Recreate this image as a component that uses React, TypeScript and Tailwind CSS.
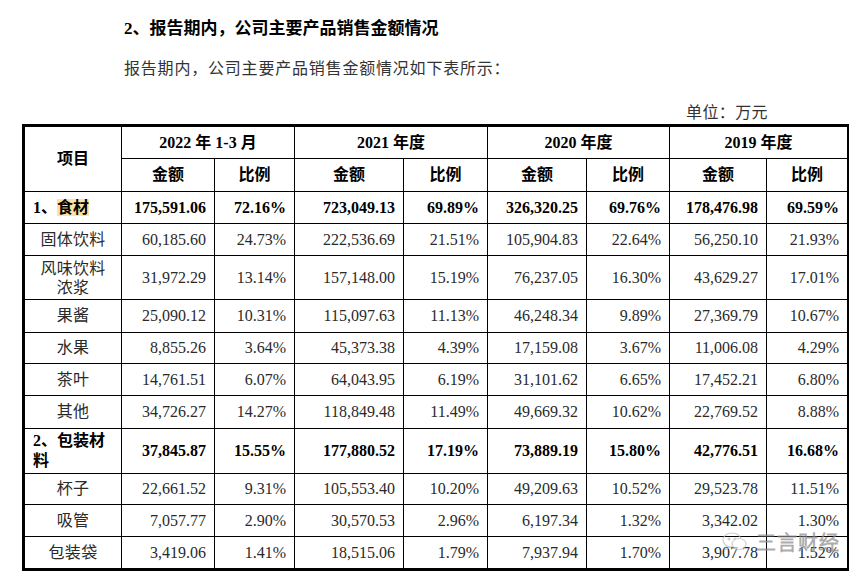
const font = { fontFamily: '"Liberation Serif", "Noto Sans CJK SC", serif' };

type Row = {
  name: string;
  vals: string[];
  bold?: boolean;
  h: string;
};

const rows: Row[] = [
  { name: "1、食材", bold: true, h: "h-[32px]", vals: ["175,591.06", "72.16%", "723,049.13", "69.89%", "326,320.25", "69.76%", "178,476.98", "69.59%"] },
  { name: "固体饮料", h: "h-[32px]", vals: ["60,185.60", "24.73%", "222,536.69", "21.51%", "105,904.83", "22.64%", "56,250.10", "21.93%"] },
  { name: "风味饮料浓浆", h: "h-[44px]", vals: ["31,972.29", "13.14%", "157,148.00", "15.19%", "76,237.05", "16.30%", "43,629.27", "17.01%"] },
  { name: "果酱", h: "h-[33px]", vals: ["25,090.12", "10.31%", "115,097.63", "11.13%", "46,248.34", "9.89%", "27,369.79", "10.67%"] },
  { name: "水果", h: "h-[31px]", vals: ["8,855.26", "3.64%", "45,373.38", "4.39%", "17,159.08", "3.67%", "11,006.08", "4.29%"] },
  { name: "茶叶", h: "h-[32px]", vals: ["14,761.51", "6.07%", "64,043.95", "6.19%", "31,101.62", "6.65%", "17,452.21", "6.80%"] },
  { name: "其他", h: "h-[33px]", vals: ["34,726.27", "14.27%", "118,849.48", "11.49%", "49,669.32", "10.62%", "22,769.52", "8.88%"] },
  { name: "2、包装材料", bold: true, h: "h-[45px]", vals: ["37,845.87", "15.55%", "177,880.52", "17.19%", "73,889.19", "15.80%", "42,776.51", "16.68%"] },
  { name: "杯子", h: "h-[31px]", vals: ["22,661.52", "9.31%", "105,553.40", "10.20%", "49,209.63", "10.52%", "29,523.78", "11.51%"] },
  { name: "吸管", h: "h-[32px]", vals: ["7,057.77", "2.90%", "30,570.53", "2.96%", "6,197.34", "1.32%", "3,342.02", "1.30%"] },
  { name: "包装袋", h: "h-[32px]", vals: ["3,419.06", "1.41%", "18,515.06", "1.79%", "7,937.94", "1.70%", "3,907.78", "1.52%"] },
];

const periods = ["2022 年 1-3 月", "2021 年度", "2020 年度", "2019 年度"];

function NameCell({ row }: { row: Row }) {
  if (row.name === "1、食材") {
    return (
      <td className="border border-black pl-[8px] text-left font-bold text-black">
        1、<span className="bg-[#fbe3a4]">食材</span>
      </td>
    );
  }
  if (row.name === "2、包装材料") {
    return (
      <td className="border border-black pl-[8px] pr-[10px] text-left font-bold leading-[20px] text-black">
        2、包装材料
      </td>
    );
  }
  if (row.name === "风味饮料浓浆") {
    return (
      <td className="border border-black text-center leading-[19px] tracking-[0.3px]">
        风味饮料
        <br />
        浓浆
      </td>
    );
  }
  return <td className="border border-black text-center tracking-[0.3px]">{row.name}</td>;
}

export default function App() {
  return (
    <div className="relative h-[579px] w-[867px] overflow-hidden bg-white text-[#2a2a2a]" style={font}>
      <h2 className="pl-[124px] pt-[19px] text-[17px] font-bold leading-[20px] text-black">
        2、报告期内，公司主要产品销售金额情况
      </h2>
      <p className="mt-[20px] pl-[124px] text-[16px] leading-[20px] tracking-[0.8px] text-[#333]">
        报告期内，公司主要产品销售金额情况如下表所示：
      </p>
      <p className="mt-[24px] pr-[99px] text-right text-[16px] leading-[20px] tracking-[0.4px] text-[#333]">
        单位：万元
      </p>

      <div className="ml-[22px] mt-px w-[827px] border-2 border-black">
        <table className="w-full table-fixed border-collapse text-[16px]">
          <colgroup>
            <col className="w-[97px]" />
            <col className="w-[93px]" />
            <col className="w-[80px]" />
            <col className="w-[109px]" />
            <col className="w-[84px]" />
            <col className="w-[99px]" />
            <col className="w-[83px]" />
            <col className="w-[97px]" />
            <col className="w-[81px]" />
          </colgroup>
          <thead className="text-black">
            <tr className="h-[32px]">
              <th rowSpan={2} className="border border-black text-center font-bold">
                项目
              </th>
              {periods.map((p) => (
                <th key={p} colSpan={2} className="border border-black text-center font-bold">
                  {p}
                </th>
              ))}
            </tr>
            <tr className="h-[33px]">
              {periods.flatMap((p) => [
                <th key={p + "a"} className="border border-black text-center font-bold">
                  金额
                </th>,
                <th key={p + "b"} className="border border-black text-center font-bold">
                  比例
                </th>,
              ])}
            </tr>
          </thead>
          <tbody>
            {rows.map((r) => (
              <tr key={r.name} className={r.h}>
                <NameCell row={r} />
                {r.vals.map((v, i) => (
                  <td
                    key={i}
                    className={
                      r.bold
                        ? "border border-black pr-[8px] text-right font-bold text-black"
                        : "border border-black pr-[8px] text-right"
                    }
                  >
                    {v}
                  </td>
                ))}
              </tr>
            ))}
          </tbody>
        </table>
      </div>

      {/* watermark */}
      <div className="absolute left-[722px] top-[531px] flex items-center gap-[8px] opacity-70">
        <svg width="26" height="20" viewBox="0 0 26 20" fill="none" stroke="#bdbdbd" strokeWidth="1.2">
          <ellipse cx="10" cy="8" rx="9" ry="7" />
          <path d="M4 14 L3 18 L8 15" />
          <circle cx="7" cy="7" r="0.9" fill="#bdbdbd" />
          <circle cx="13" cy="7" r="0.9" fill="#bdbdbd" />
          <ellipse cx="17" cy="12" rx="7" ry="5.5" fill="white" />
        </svg>
        <span
          className="text-[20px] font-light leading-[22px] tracking-[1px] text-white"
          style={{ WebkitTextStroke: "1px #8a8a8a", fontFamily: '"Noto Sans CJK SC", sans-serif' }}
        >
          三言财经
        </span>
      </div>
    </div>
  );
}
